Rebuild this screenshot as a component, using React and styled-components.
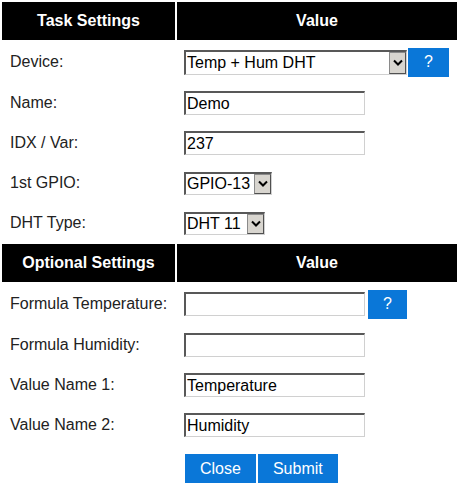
import React from 'react'
import styled, { createGlobalStyle } from 'styled-components'

const GlobalStyle = createGlobalStyle`
body {
  margin: 0;
  background: #fff;
  font-family: "Liberation Sans", Arial, sans-serif;
  font-size: 16px;
  color: #222;
}
`

const Table = styled.div`
display: grid;
grid-template-columns: 173px 280px;
gap: 2px;
padding: 2px;
width: 459px;
box-sizing: border-box;
`

const HeaderCell = styled.div`
height: 38px;
background: #000;
color: #fff;
font-weight: bold;
display: flex;
align-items: center;
justify-content: center;
`

const Cell = styled.div`
height: ${p => p.$h || 38}px;
box-sizing: border-box;
padding: 0 7px;
display: flex;
align-items: ${p => p.$top ? 'flex-start' : 'center'};
padding-top: ${p => p.$top ? '8px' : '0'};
`

const Label = styled.span`
padding-left: 1px;
`

const TextInput = styled.input`
width: 181px;
height: 24px;
box-sizing: border-box;
margin: 0;
padding: 0 1px;
font: 16px "Liberation Sans", Arial, sans-serif;
color: #000;
background: #fff;
border-style: solid;
border-width: 2px 1px 1px 2px;
border-color: #585858 #d0d0d0 #d0d0d0 #585858;
outline: none;
`

const SelectBox = styled.div`
display: flex;
width: ${p => p.$w}px;
height: ${p => p.$h || 23}px;
box-sizing: border-box;
border-style: solid;
border-width: 2px 1px 1px 2px;
border-color: #585858 #d0d0d0 #d0d0d0 #585858;
background: #fff;
`

const NativeSelect = styled.select`
appearance: none;
-webkit-appearance: none;
border: none;
outline: none;
flex: 1;
min-width: 0;
margin: 0;
padding: 0 1px;
font: 16px "Liberation Sans", Arial, sans-serif;
color: #000;
background: transparent;
`

const Arrow = styled.span`
width: 15px;
flex: none;
display: flex;
align-items: center;
justify-content: center;
background: #d8d5cf;
border: 1px solid;
border-color: #8a8a8a #505050 #505050 #8a8a8a;
`

const Blue = styled.button`
height: 29px;
min-width: ${p => p.$w || 0}px;
margin: 0 0 0 ${p => p.$ml || 0}px;
padding: 0 15px;
border: none;
border-radius: 0;
background: #0a77d8;
color: #fff;
font: 16px "Liberation Sans", Arial, sans-serif;
cursor: pointer;
`

const ButtonBar = styled.div`
display: flex;
gap: 2px;
padding-left: 1px;
`

const Chevron = () => (
  <svg width="10" height="7" viewBox="0 0 10 7">
    <polyline points="1,1.5 5,5.5 9,1.5" fill="none" stroke="#000" strokeWidth="2" />
  </svg>
)

const Select = ({ w, h, value, options }) => (
  <SelectBox $w={w} $h={h}>
    <NativeSelect defaultValue={value}>
      {options.map(o => <option key={o}>{o}</option>)}
    </NativeSelect>
    <Arrow><Chevron /></Arrow>
  </SelectBox>
)

export default function App() {
  return (
    <>
      <GlobalStyle />
      <Table>
        <HeaderCell>Task Settings</HeaderCell>
        <HeaderCell>Value</HeaderCell>

        <Cell $h={40}><Label>Device:</Label></Cell>
        <Cell $h={40}>
          <Select w={223} h={25} value="Temp + Hum DHT" options={['Temp + Hum DHT']} />
          <Blue $w={41} $ml={1}>?</Blue>
        </Cell>

        <Cell><Label>Name:</Label></Cell>
        <Cell><TextInput defaultValue="Demo" /></Cell>

        <Cell><Label>IDX / Var:</Label></Cell>
        <Cell><TextInput defaultValue="237" /></Cell>

        <Cell><Label>1st GPIO:</Label></Cell>
        <Cell><Select w={88} value="GPIO-13" options={['GPIO-13']} /></Cell>

        <Cell><Label>DHT Type:</Label></Cell>
        <Cell><Select w={81} value="DHT 11" options={['DHT 11', 'DHT 22']} /></Cell>

        <HeaderCell>Optional Settings</HeaderCell>
        <HeaderCell>Value</HeaderCell>

        <Cell $h={40}><Label>Formula Temperature:</Label></Cell>
        <Cell $h={40}>
          <TextInput defaultValue="" />
          <Blue $w={39} $ml={3}>?</Blue>
        </Cell>

        <Cell><Label>Formula Humidity:</Label></Cell>
        <Cell><TextInput defaultValue="" /></Cell>

        <Cell><Label>Value Name 1:</Label></Cell>
        <Cell><TextInput defaultValue="Temperature" /></Cell>

        <Cell><Label>Value Name 2:</Label></Cell>
        <Cell><TextInput defaultValue="Humidity" /></Cell>

        <Cell $h={40} />
        <Cell $h={40} $top>
          <ButtonBar>
            <Blue>Close</Blue>
            <Blue>Submit</Blue>
          </ButtonBar>
        </Cell>
      </Table>
    </>
  )
}
